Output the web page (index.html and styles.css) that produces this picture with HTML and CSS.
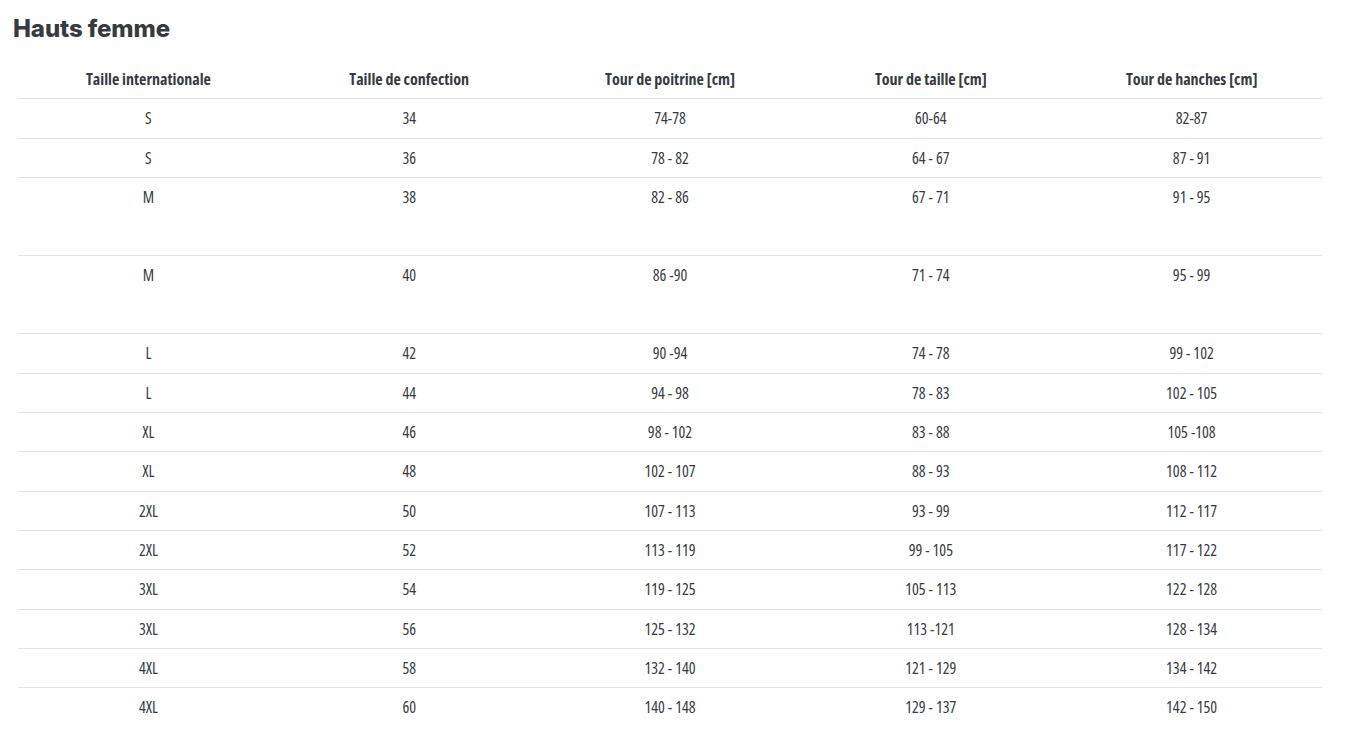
FILE: index.html
```html
<!DOCTYPE html>
<html lang="fr">
<head>
<meta charset="utf-8">
<title>Hauts femme</title>
<link rel="stylesheet" href="styles.css">
</head>
<body>
<main class="page">
  <h1 class="title">Hauts femme</h1>
  <table class="sizes">
    <thead>
      <tr>
        <th>Taille internationale</th>
        <th>Taille de confection</th>
        <th>Tour de poitrine [cm]</th>
        <th>Tour de taille [cm]</th>
        <th>Tour de hanches [cm]</th>
      </tr>
    </thead>
    <tbody>
      <tr><td>S</td><td>34</td><td>74-78</td><td>60-64</td><td>82-87</td></tr>
      <tr><td>S</td><td>36</td><td>78 - 82</td><td>64 - 67</td><td>87 - 91</td></tr>
      <tr class="tall"><td>M</td><td>38</td><td>82 - 86</td><td>67 - 71</td><td>91 - 95</td></tr>
      <tr class="tall"><td>M</td><td>40</td><td>86 -90</td><td>71 - 74</td><td>95 - 99</td></tr>
      <tr><td>L</td><td>42</td><td>90 -94</td><td>74 - 78</td><td>99 - 102</td></tr>
      <tr><td>L</td><td>44</td><td>94 - 98</td><td>78 - 83</td><td>102 - 105</td></tr>
      <tr><td>XL</td><td>46</td><td>98 - 102</td><td>83 - 88</td><td>105 -108</td></tr>
      <tr><td>XL</td><td>48</td><td>102 - 107</td><td>88 - 93</td><td>108 - 112</td></tr>
      <tr><td>2XL</td><td>50</td><td>107 - 113</td><td>93 - 99</td><td>112 - 117</td></tr>
      <tr><td>2XL</td><td>52</td><td>113 - 119</td><td>99 - 105</td><td>117 - 122</td></tr>
      <tr><td>3XL</td><td>54</td><td>119 - 125</td><td>105 - 113</td><td>122 - 128</td></tr>
      <tr><td>3XL</td><td>56</td><td>125 - 132</td><td>113 -121</td><td>128 - 134</td></tr>
      <tr><td>4XL</td><td>58</td><td>132 - 140</td><td>121 - 129</td><td>134 - 142</td></tr>
      <tr><td>4XL</td><td>60</td><td>140 - 148</td><td>129 - 137</td><td>142 - 150</td></tr>
    </tbody>
  </table>
</main>
</body>
</html>
```
FILE: styles.css
```css
html, body {
  margin: 0;
  padding: 0;
  background: #ffffff;
}

.page {
  padding: 14px 50px 0 13px;
  color: #353b42;
}

.title {
  margin: 0 0 15px 0;
  font-family: Inter, Roboto, sans-serif;
  font-weight: 800;
  font-size: 24px;
  line-height: 30px;
  letter-spacing: -0.1px;
  color: #353b42;
}

.sizes {
  margin-left: 5px;
  width: 1304px;
  border-collapse: collapse;
  table-layout: fixed;
  font-family: "Open Sans", "DejaVu Sans Condensed", sans-serif;
  font-stretch: 75%;
  font-size: 16px;
  color: #353b42;
}

.sizes th,
.sizes td {
  text-align: center;
  vertical-align: top;
  padding: 10px 4px;
  line-height: 18.33px;
}

.sizes th {
  font-weight: 700;
  font-stretch: 73%;
  padding-top: 11px;
  padding-bottom: 10px;
}

.sizes td {
  font-weight: 400;
  border-top: 1px solid #e3e3e3;
}

.sizes tr.tall td {
  padding-bottom: 48.8px;
}
```
